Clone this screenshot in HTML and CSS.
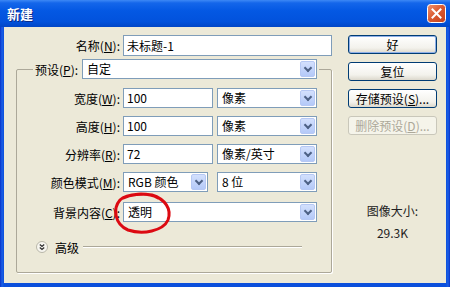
FILE: index.html
```html
<!DOCTYPE html>
<html lang="zh-CN">
<head>
  <meta charset="UTF-8" />
  <title>新建</title>
  <link rel="stylesheet" href="styles.css">
</head>
<body>

  <div class="window">

    <!-- Barra de título -->
    <div class="titlebar">
      <span class="title">新建</span>
      <span class="close">
        <svg width="19" height="19" viewBox="0 0 19 19">
          <defs>
            <linearGradient id="cg" x1="0" y1="0" x2="1" y2="1">
              <stop offset="0" stop-color="#f0936f" />
              <stop offset="0.5" stop-color="#d9582f" />
              <stop offset="1" stop-color="#c2401c" />
            </linearGradient>
          </defs>
          <rect x="0.5" y="0.5" width="18" height="18" rx="3" fill="url(#cg)" stroke="#fff" />
          <path d="M5.5 5.5 L13.5 13.5 M13.5 5.5 L5.5 13.5" stroke="#fff" stroke-width="2" stroke-linecap="square" />
        </svg>
      </span>
    </div>

    <div class="client">

      <!-- Formulário -->
      <div class="main">
        <div class="name-row">
          <span class="lbl">名称(<u>N</u>):</span>
          <div class="field name-field">未标题-1</div>
        </div>

        <fieldset class="group">
          <legend class="preset">
            <span class="preset-lbl">预设(<u>P</u>):</span>
            <div class="select preset-select">自定<i class="arrow"></i></div>
          </legend>

          <div class="frow first">
            <span class="lbl">宽度(<u>W</u>):</span>
            <div class="field num">100</div>
            <div class="select unit">像素<i class="arrow"></i></div>
          </div>
          <div class="frow">
            <span class="lbl">高度(<u>H</u>):</span>
            <div class="field num">100</div>
            <div class="select unit">像素<i class="arrow"></i></div>
          </div>
          <div class="frow">
            <span class="lbl">分辨率(<u>R</u>):</span>
            <div class="field num">72</div>
            <div class="select unit">像素/英寸<i class="arrow"></i></div>
          </div>
          <div class="frow">
            <span class="lbl">颜色模式(<u>M</u>):</span>
            <div class="select mode">RGB 颜色<i class="arrow"></i></div>
            <div class="select unit">8 位<i class="arrow"></i></div>
          </div>
          <div class="frow bg-row">
            <span class="lbl">背景内容(<u>C</u>):</span>
            <div class="select bg">透明<i class="arrow"></i></div>
          </div>

          <div class="advanced">
            <span class="adv-icon">
              <svg width="12" height="12" viewBox="0 0 12 12">
                <circle cx="6" cy="6" r="5.5" fill="#f7f6f0" stroke="#b8b6a8" />
                <path d="M3.8 3.4 L6 5.4 L8.2 3.4 M3.8 6.4 L6 8.4 L8.2 6.4" fill="none" stroke="#333" stroke-width="1.3" />
              </svg>
            </span>
            <span class="adv-text">高级</span>
            <span class="adv-line"></span>
          </div>
        </fieldset>
      </div>

      <!-- Botões -->
      <div class="side">
        <button class="btn default">好</button>
        <button class="btn">复位</button>
        <button class="btn">存储预设(<u>S</u>)...</button>
        <button class="btn disabled">删除预设(<u>D</u>)...</button>
        <div class="size">
          <div>图像大小:</div>
          <div class="size-val">29.3K</div>
        </div>
      </div>

    </div>

    <!-- círculo vermelho desenhado à mão -->
    <svg class="mark" width="450" height="287" viewBox="0 0 450 287">
      <path d="M158 198 C148 192 127 193 120 200 C113 208 114 224 128 230 C143 235 163 231 168 220 C172 209 165 199 152 195 C142 193 130 195 123 198"
            fill="none" stroke="#dc0a12" stroke-width="3" stroke-linecap="round" />
    </svg>

  </div>

</body>
</html>
```

FILE: styles.css
```css
/* Reset básico */
* {
  margin: 0;
  padding: 0;
  box-sizing: border-box;
}
body {
  font-family: "Noto Sans CJK SC", "Liberation Sans", sans-serif;
  font-size: 12px;
  color: #000;
  background: #0b44d4;
}

/* Janela */
.window {
  position: relative;
  width: 450px;
  height: 287px;
  background: linear-gradient(90deg, #0831c8 0, #1a5fe6 2px, #0b4fdc 4px, #0b4fdc 446px, #1a5fe6 448px, #0831c8 450px);
  display: flex;
  flex-direction: column;
}

.titlebar {
  height: 27px;
  display: flex;
  align-items: center;
  justify-content: space-between;
  padding: 0 4px 0 7px;
  background: linear-gradient(#3d88f5 0, #1466ea 3px, #0458e3 40%, #0252dc 80%, #0146c6 100%);
}
.title {
  color: #fff;
  font-weight: 700;
  font-size: 13px;
  text-shadow: 1px 1px 0 #0a2a88;
}
.close {
  display: flex;
}

.client {
  flex: 1;
  margin: 0 4px 4px;
  background: #ece9d8;
  display: flex;
}

/* --- Formulário --- */
.main {
  width: 332px;
}
.name-row {
  display: flex;
  align-items: center;
  margin-top: 8px;
}
.name-row .lbl {
  width: 116px;
  text-align: right;
  margin-right: 3px;
  white-space: nowrap;
}
.field {
  height: 20px;
  background: #fff;
  border: 1px solid #7f9db9;
  padding-left: 3px;
  line-height: 18px;
}
.name-field {
  width: 209px;
  height: 21px;
  line-height: 19px;
}

.group {
  margin: 3px 0 0 12px;
  width: 314px;
  height: 214px;
  border: 1px solid #aca899;
  border-radius: 2px;
  padding: 0 12px 0 16px;
  box-shadow: 1px 1px 0 #fff;
}
.preset {
  width: 286px;
  height: 20px;
  padding: 0 2px;
  display: flex;
  align-items: center;
  background: #ece9d8;
}
.preset-lbl {
  flex: 1;
  white-space: nowrap;
}

.select {
  position: relative;
  height: 20px;
  background: #fff;
  border: 1px solid #7f9db9;
  padding-left: 4px;
  line-height: 18px;
  white-space: nowrap;
}
.arrow {
  position: absolute;
  right: 1px;
  top: 1px;
  width: 15px;
  height: 16px;
  border-radius: 2px;
  border: 1px solid #b6c8f4;
  background: linear-gradient(#d3e0fd, #b4c9f8);
}
.arrow::after {
  content: "";
  position: absolute;
  left: 4px;
  top: 3px;
  width: 4px;
  height: 4px;
  border-right: 2px solid #4d6185;
  border-bottom: 2px solid #4d6185;
  transform: rotate(45deg);
}
.preset-select {
  width: 235px;
  flex: none;
}

.frow {
  display: flex;
  align-items: center;
  height: 20px;
  margin-top: 8px;
}
.frow.first {
  margin-top: 9px;
}
.frow.bg-row {
  margin-top: 10px;
}
.frow .lbl {
  width: 87px;
  text-align: right;
  margin-right: 3px;
  white-space: nowrap;
}
.num {
  width: 90px;
  margin-right: 4px;
}
.unit {
  width: 100px;
}
.mode {
  width: 85px;
  margin-right: 9px;
}
.bg {
  width: 194px;
}

.advanced {
  display: flex;
  align-items: center;
  height: 12px;
  margin-top: 19px;
}
.adv-icon {
  display: flex;
  margin-left: 3px;
}
.adv-text {
  margin-left: 7px;
  margin-right: 4px;
}
.adv-line {
  flex: 1;
  height: 2px;
  margin-right: 17px;
  border-top: 1px solid #aca899;
  border-bottom: 1px solid #fff;
}

/* --- Botões --- */
.side {
  flex: 1;
  padding: 8px 0 0 12px;
  display: flex;
  flex-direction: column;
}
.btn {
  width: 89px;
  height: 19px;
  margin-bottom: 8px;
  font-family: inherit;
  font-size: 12px;
  color: #000;
  border: 1px solid #003c74;
  border-radius: 3px;
  background: linear-gradient(#ffffff, #f3f2ec 70%, #dcd8cc);
  line-height: 16px;
}
.btn.default {
  box-shadow: inset 0 0 0 1px #8fb0e8;
}
.btn.disabled {
  color: #aca899;
  border-color: #c9c7ba;
  background: #f5f4ea;
}

.size {
  margin-top: 61px;
  width: 89px;
  text-align: center;
  line-height: 14px;
  color: #222;
}
.size-val {
  margin-top: 8px;
}

/* marca vermelha por cima */
.mark {
  position: absolute;
  left: 0;
  top: 0;
  pointer-events: none;
}
```
